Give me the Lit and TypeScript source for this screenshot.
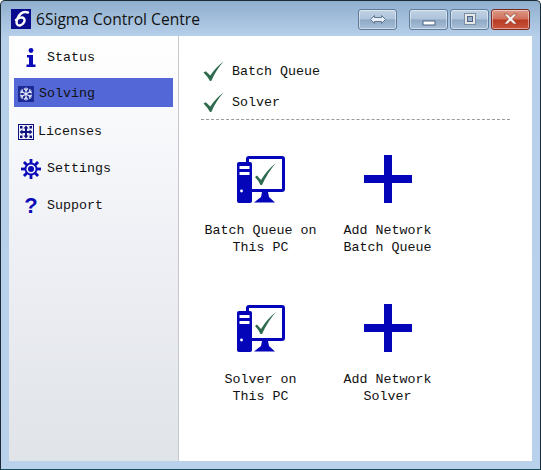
import { LitElement, html, css, svg } from "lit";
import { customElement } from "lit/decorators.js";

const check = html`<svg width="21" height="21" viewBox="0 0 21 21"><path d="M0.5 11.5 L2.8 10.2 L7.3 14.6 Q12 7 20.5 0.5 Q13 9 8.3 20 L7 20 Q4.5 15.5 0.5 11.5Z" fill="#2f6b4f"/></svg>`;

const pc = html`<svg width="48" height="47" viewBox="0 0 48 47">
  <path fill="#0404b8" d="M9 3 Q9 0 12 0 H45 Q48 0 48 3 V33 Q48 36 45 36 H15 V33 H45 V3 H12 V6 H9Z"/>
  <path fill="#0404b8" d="M2 6 H13 Q15 6 15 8 V45 Q15 47 13 47 H2 Q0 47 0 45 V8 Q0 6 2 6Z"/>
  <rect x="2.5" y="10" width="10" height="3" fill="#fff"/><rect x="2.5" y="16" width="10" height="3" fill="#fff"/>
  <circle cx="4.5" cy="35" r="1.4" fill="#fff"/>
  <path fill="#0404b8" d="M25 36 H31 L32 41 L38 46.5 H17 L24 41Z"/>
  <path fill="#2f6b4f" d="M18 21 L20 19.5 L24 24 Q30 14 39 7 Q31 16 25 29 L23.5 29 Q21 24 18 21Z"/>
</svg>`;

const plus = html`<svg width="48" height="48" viewBox="0 0 48 48"><path fill="#0404b8" d="M20 0 H28 V20 H48 V28 H28 V48 H20 V28 H0 V20 H20Z"/></svg>`;

const gear = svg`<g fill="#0a0ab8" transform="translate(10 10)">
  ${[0, 45, 90, 135, 180, 225, 270, 315].map((a) => svg`<rect x="-1.4" y="-10" width="2.8" height="5" transform="rotate(${a})"/>`)}
  <path fill-rule="evenodd" d="M0-6.5A6.5 6.5 0 1 1 0 6.5A6.5 6.5 0 1 1 0-6.5ZM0-4.6A4.6 4.6 0 1 0 0 4.6A4.6 4.6 0 1 0 0-4.6Z"/>
  <circle r="3"/></g>`;

const icons: Record<string, unknown> = {
  info: html`<span class="glyph"><svg width="10" height="20" viewBox="0 0 10 20"><circle cx="5" cy="2.5" r="2.4" fill="#0a0ab8"/><path fill="#0a0ab8" d="M1 7 H7 V16.5 H9.5 V19 H0.5 V16.5 H3 V9.5 H1Z"/></svg></span>`,
  snow: html`<span class="glyph-sq"><svg width="16" height="16" viewBox="0 0 16 16"><rect width="16" height="16" fill="#1c2a96"/><g stroke="#dfe3f6" stroke-width="1.2" fill="none"><path d="M8 1.5V14.5M2.4 4.7L13.6 11.3M13.6 4.7L2.4 11.3"/><path d="M6 2.5L8 4.5L10 2.5M6 13.5L8 11.5L10 13.5M2 7L4.6 6L4 3.2M14 7L11.4 6L12 3.2M2 9L4.6 10L4 12.8M14 9L11.4 10L12 12.8"/></g></svg></span>`,
  lic: html`<span class="glyph-sq"><svg width="16" height="16" viewBox="0 0 16 16"><rect width="16" height="16" fill="#12127e"/><rect x="1" y="1" width="14" height="14" fill="#eef0fa"/><g fill="#12127e"><path d="M8 1.5L10.5 4.5H9V7H11.5V5.5L14.5 8L11.5 10.5V9H9V11.5H10.5L8 14.5L5.5 11.5H7V9H4.5V10.5L1.5 8L4.5 5.5V7H7V4.5H5.5Z"/><rect x="2" y="2" width="2.5" height="2.5"/><rect x="11.5" y="2" width="2.5" height="2.5"/><rect x="2" y="11.5" width="2.5" height="2.5"/><rect x="11.5" y="11.5" width="2.5" height="2.5"/></g></svg></span>`,
  gear: html`<span class="glyph"><svg width="20" height="20" viewBox="0 0 20 20">${gear}</svg></span>`,
  help: html`<span class="glyph q">?</span>`,
};

const nav = [
  { label: "Status", icon: "info", cls: "" },
  { label: "Solving", icon: "snow", cls: "compact active" },
  { label: "Licenses", icon: "lic", cls: "compact" },
  { label: "Settings", icon: "gear", cls: "" },
  { label: "Support", icon: "help", cls: "" },
];

const tiles = [
  { icon: pc, lines: ["Batch Queue on", "This PC"] },
  { icon: plus, lines: ["Add Network", "Batch Queue"] },
  { icon: pc, lines: ["Solver on", "This PC"] },
  { icon: plus, lines: ["Add Network", "Solver"] },
];

@customElement("app-root")
export class AppRoot extends LitElement {
  static styles = css`
    :host {
      display: flex;
      flex-direction: column;
      width: 541px;
      height: 470px;
      box-sizing: border-box;
      border: 1px solid #1c2c36;
      border-bottom-color: #16505c;
      border-radius: 5px 5px 0 0;
      background: linear-gradient(180deg, #8fafce 0, #b7d0ea 36px, #b9d1ea 100%);
      font-family: "Liberation Mono", monospace;
      font-size: 13.33px;
      color: #111;
      overflow: hidden;
    }
    .title {
      height: 35px;
      flex: none;
      display: flex;
      align-items: center;
      padding: 0 10px 0 10px;
      box-sizing: border-box;
    }
    .logo { width: 20px; height: 20px; flex: none; display: block; margin-top: 1px; }
    .name {
      margin-left: 5px;
      font: 15.6px "Open Sans", sans-serif;
      color: #111;
      flex: 1;
    }
    .btns { display: flex; margin-top: 1px; }
    .wb {
      height: 21px;
      width: 39px;
      box-sizing: border-box;
      border: 1px solid #5f7d9b;
      border-radius: 3px;
      background: linear-gradient(180deg, #c0d2e4 0, #aec3da 48%, #8ea8c4 52%, #a9c0d8 100%);
      box-shadow: inset 0 0 0 1px rgba(255,255,255,.45);
      display: flex;
      align-items: center;
      justify-content: center;
    }
    .wb.swap { margin-right: 12px; }
    .wb.min, .wb.max { margin-right: 2px; }
    .wb.min svg { margin-top: 6px; }
    .wb.close {
      border-color: #7a2a1e;
      background: linear-gradient(180deg, #dc9a88 0, #cf6f59 48%, #b83a22 52%, #c9553d 100%);
    }
    .client { flex: 1; display: flex; margin: 0 8px 8px 8px; min-height: 0; }
    .side {
      width: 170px;
      flex: none;
      box-sizing: border-box;
      border-right: 1px solid #c6c8cc;
      background: linear-gradient(180deg, #ffffff 0, #eef0f5 50%, #e0e3e8 100%);
      padding: 3px 5px 0;
    }
    .item {
      height: 37px;
      display: flex;
      align-items: center;
      padding-left: 7px;
    }
    .item .glyph { margin-right: 6px; }
    .item.active {
      background: #5368d6;
      height: 29px;
      margin: 2px 0 6px;
      box-sizing: border-box;
      padding-top: 2px;
    }
    .item.active .glyph-sq { margin-right: 5px; }
    .item.compact { padding-left: 4px; }
    .glyph { width: 20px; display: flex; justify-content: center; flex: none; }
    .glyph-sq { width: 16px; height: 16px; margin-right: 4px; flex: none; display: block; }
    .glyph-sq svg, .glyph svg { display: block; }
    .q { font: bold 22px/22px "Liberation Sans", sans-serif; color: #0a0ab8; }
    .main { flex: 1; background: #fff; padding: 20px 22px 0 22px; min-width: 0; }
    .row { display: flex; align-items: center; height: 31px; gap: 8px; }
    .row svg { display: block; margin-left: 2px; }
    .rule { border-top: 1px dashed #9a9a9a; margin-top: 1px; }
    .grid {
      display: grid;
      grid-template-columns: 127px 127px;
      grid-auto-rows: 149px;
      margin-top: 35px;
      margin-left: -4px;
    }
    .tile {
      display: flex;
      flex-direction: column;
      align-items: center;
      text-align: center;
      line-height: 17px;
    }
    .ic { height: 48px; display: flex; align-items: center; margin-bottom: 19px; }
    .ic svg { display: block; }
  `;

  render() {
    return html`
      <div class="title">
        <svg class="logo" viewBox="0 0 20 20"><rect width="20" height="20" fill="#0a0a8c"/><path fill="none" stroke="#fff" stroke-width="2.4" stroke-linecap="round" d="M17 3.5C12 2 8.5 5 6.5 9.5C4.5 14 6 17 9 16.5C12.5 16 14.5 11.5 13 9.5C11.5 7.8 8 8.5 5 11"/></svg>
        <div class="name">6Sigma Control Centre</div>
        <div class="btns">
          <div class="wb swap"><svg width="16" height="9" viewBox="0 0 16 9"><path d="M0.5 4.5 L4.5 0.5 V2.5 H11.5 V0.5 L15.5 4.5 L11.5 8.5 V6.5 H4.5 V8.5Z" fill="#e8eef5" stroke="#5f7890"/></svg></div>
          <div class="wb min"><svg width="14" height="7" viewBox="0 0 14 7"><rect x="1" y="2" width="12" height="4" fill="#fff" stroke="#4d6480" stroke-width="1"/></svg></div>
          <div class="wb max"><svg width="12" height="12" viewBox="0 0 12 12"><rect x="0.5" y="0.5" width="11" height="11" fill="#e8e8e8" stroke="#7b8ea2"/><rect x="3.5" y="3.5" width="5" height="5" fill="#9db3cb" stroke="#4d6480"/></svg></div>
          <div class="wb close"><svg width="15" height="12" viewBox="0 0 15 12"><path d="M1 1H4.5L7.5 4L10.5 1H14L9.5 6L14 11H10.5L7.5 8L4.5 11H1L5.5 6Z" fill="#f4f0ee" stroke="#8c3a2a" stroke-width=".6"/></svg></div>
        </div>
      </div>
      <div class="client">
        <div class="side">
          ${nav.map((n) => html`<div class="item ${n.cls}">${icons[n.icon]}<span>${n.label}</span></div>`)}
        </div>
        <div class="main">
          <div class="row">${check}<span>Batch Queue</span></div>
          <div class="row">${check}<span>Solver</span></div>
          <div class="rule"></div>
          <div class="grid">
            ${tiles.map((t) => html`<div class="tile"><div class="ic">${t.icon}</div>${t.lines.map((l) => html`<div>${l}</div>`)}</div>`)}
          </div>
        </div>
      </div>
    `;
  }
}
